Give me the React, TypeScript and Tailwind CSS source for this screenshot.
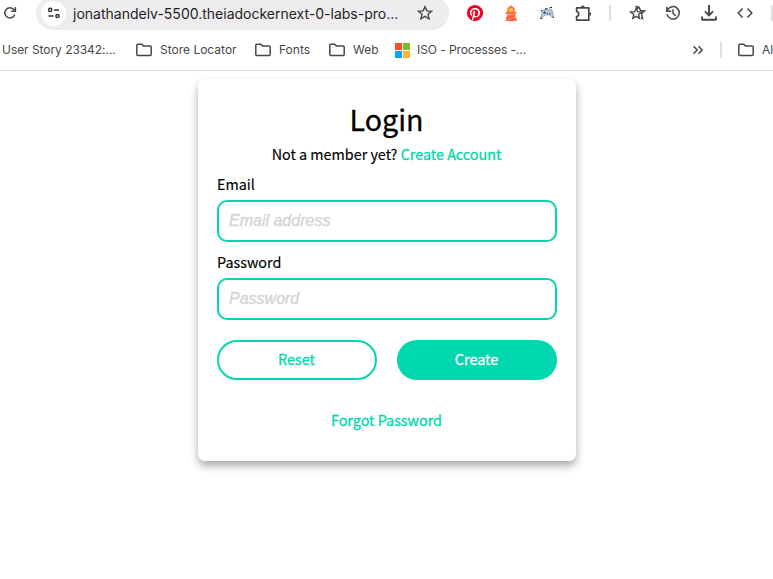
import React from "react";

const Cell = ({ children }: { children: React.ReactNode }) => (
  <div className="flex h-8 w-9 shrink-0 items-center justify-center">{children}</div>
);

const Folder = () => (
  <svg width="16" height="14" viewBox="0 0 16 14" className="shrink-0" fill="none" stroke="#474747" strokeWidth="1.5">
    <path d="M.8 11.4V2.2q0-1 1-1h3.9l1.7 1.7h6.8q1 0 1 1v7.5q0 1-1 1H1.8q-1 0-1-1z" />
  </svg>
);

const Star = () => (
  <svg width="16" height="16" viewBox="0 0 16 16" fill="none" stroke="#474747" strokeWidth="1.4">
    <path d="M8 1.7l1.9 4.2 4.6.4-3.5 3 1.1 4.5L8 11.4l-4.1 2.4L5 9.3l-3.5-3 4.6-.4z" />
  </svg>
);

const Input = ({ label, hint }: { label: string; hint: string }) => (
  <label className="flex flex-col">
    <span className="h-[30px] text-[14.35px] leading-[28px] [-webkit-text-stroke:0.15px]">{label}</span>
    <input
      placeholder={hint}
      className="h-[42px] w-full rounded-[10px] border-2 border-[#00d7ae] pr-3 pl-[10px] font-['Liberation_Sans',sans-serif] text-base outline-none placeholder:text-[#d3d3d3] placeholder:italic placeholder:[-webkit-text-stroke:0.3px_#d3d3d3]"
    />
  </label>
);

export default function App() {
  return (
    <div className="h-[579px] w-[773px] overflow-hidden bg-white font-['Inter',sans-serif] text-[#474747]">
      <header className="h-[71px] overflow-hidden border-b border-[#e0e0e0]">
        <div className="-mt-1 flex h-[34px] items-center">
          <div className="w-9 shrink-0 pl-[3px]">
            <svg width="14" height="14" viewBox="0 0 14 14" fill="none" stroke="#474747" strokeWidth="1.5">
              <path d="M11.8 8.4A5.1 5.1 0 1 1 10.8 3.5L12.4 5" />
              <path d="M12.4 1.1V5.3H8.2" />
            </svg>
          </div>
          <div className="flex h-[34px] w-[413px] shrink-0 items-center rounded-full bg-[#eeecee] pl-[5px]">
            <div className="flex size-[25px] shrink-0 items-center justify-center rounded-full bg-white">
              <svg width="14" height="12" viewBox="0 0 14 12" fill="none" stroke="#303030" strokeWidth="1.5">
                <circle cx="3.2" cy="2.9" r="1.6" />
                <path d="M7 2.9h5M1.5 9h5" />
                <circle cx="10.5" cy="9" r="1.6" />
              </svg>
            </div>
            <span className="ml-[7px] w-[336px] shrink-0 whitespace-nowrap text-[14px] text-[#1f1f1f]">jonathandelv-5500.theiadockernext-0-labs-pro...</span>
            <div className="ml-2 shrink-0"><Star /></div>
          </div>
          <div className="ml-2 flex">
            <Cell>
              <svg width="16" height="16" viewBox="0 0 24 24" fill="#f0001f">
                <path d="M12 0C5.37 0 0 5.37 0 12c0 5.08 3.16 9.42 7.62 11.17-.1-.95-.2-2.4.04-3.44l1.41-5.96s-.36-.72-.36-1.78c0-1.67.97-2.91 2.17-2.91 1.02 0 1.52.77 1.52 1.69 0 1.03-.66 2.57-1 4-.28 1.19.6 2.16 1.78 2.16 2.13 0 3.77-2.25 3.77-5.49 0-2.87-2.06-4.87-5-4.87-3.41 0-5.41 2.56-5.41 5.2 0 1.03.4 2.13.89 2.73.1.12.11.22.08.34l-.33 1.36c-.05.22-.17.27-.4.16-1.5-.7-2.43-2.88-2.43-4.64 0-3.78 2.74-7.25 7.91-7.25 4.15 0 7.38 2.96 7.38 6.92 0 4.12-2.6 7.45-6.21 7.45-1.21 0-2.35-.63-2.74-1.37l-.75 2.84c-.27 1.04-1 2.35-1.49 3.14A12 12 0 1 0 12 0z" />
              </svg>
            </Cell>
            <Cell>
              <svg width="14" height="16" viewBox="0 0 14 16">
                <path d="M3.4 3.2L7 .2l3.6 3v3.6h1.6v2.4H1.8V6.8h1.6z" fill="#ff7043" />
                <rect x="5.2" y="3.2" width="3.6" height="3.6" rx="1" fill="#ffd426" />
                <path d="M3.2 9.2h7.6L13 16H1.4z" fill="#ff8a66" />
                <path d="M2.8 11.4l8-2.2.6 2-9 3zM1.6 15.6l10.2-3 .8 2.2-4 1.2z" fill="#ff5a36" />
              </svg>
            </Cell>
            <Cell>
              <svg width="14" height="14" viewBox="0 0 14 14">
                <path d="M2.4 4.2L6 3.6l6 .2 1.6 6.4-2 .6L9.4 9H5l-2.4 2.8L.6 11z" fill="#a9cfe2" stroke="#7d9bab" strokeWidth=".7" />
                <path d="M5 3.2l2.5-.8M9.5 2l2.6-.8M.3 12.4h1.8M1 5.2l1-.9M12.4 11.3H14" stroke="#1c1c1c" strokeWidth="1.1" />
                <path d="M3 6.6h3M4.5 5.1v3" stroke="#5a4a86" strokeWidth="1" />
                <circle cx="10.2" cy="5.9" r=".9" fill="#e0b64a" />
                <circle cx="9.8" cy="7.8" r=".9" fill="#b04a80" />
                <path d="M6.8 7.6h1.2" stroke="#26415b" />
              </svg>
            </Cell>
            <Cell>
              <svg width="17" height="17" viewBox="0 0 17 17" fill="none" stroke="#474747" strokeWidth="1.7">
                <path d="M1.6 2.9h12.2v12.2H1.6v-3.6c2.8-.5 2.8-4.6 0-5z" strokeLinejoin="round" />
                <path d="M5.8 2.4a1.9 1.9 0 0 1 3.8 0M14.3 7.1a1.9 1.9 0 0 1 0 3.8" fill="#474747" stroke="none" />
              </svg>
            </Cell>
            <div className="flex w-[18px] items-center justify-center"><div className="h-4 w-0.5 bg-[#e0e0e0]" /></div>
            <Cell>
              <svg width="17" height="16" viewBox="0 0 17 16" fill="none" stroke="#474747" strokeWidth="1.4">
                <path d="M7.2 3.2l1.5 3.5 3.8.3-2.9 2.5.9 3.9-3.3-2-3.3 2 .9-3.9L1.6 7l4.1-.3z" />
                <path d="M6.6 2L8 1.4l1.2 2.7M9.6 1.2l1.9 4.2 4.2.4-3.2 2.8 1.1 4.9-1.6-.9" />
              </svg>
            </Cell>
            <Cell>
              <svg width="16" height="16" viewBox="0 0 16 16" fill="none" stroke="#474747" strokeWidth="1.5">
                <path d="M2.1 6.1A6.2 6.2 0 1 1 2 9.2M1.8 1.7v4.5h4.5M8 4.2v4l2.8 2.8" />
              </svg>
            </Cell>
            <Cell>
              <svg width="16" height="16" viewBox="0 0 16 16" fill="none" stroke="#474747" strokeWidth="1.9">
                <path d="M8 0v10M4 6.3l4 4 4-4M1 11.5v2.4q0 .9.9.9h12.2q.9 0 .9-.9v-2.4" />
              </svg>
            </Cell>
            <Cell>
              <svg width="16" height="12" viewBox="0 0 16 12" fill="none" stroke="#474747" strokeWidth="1.5">
                <path d="M5.5 1.5L1.2 6l4.3 4.5M10.5 1.5L14.8 6l-4.3 4.5" />
              </svg>
            </Cell>
            <div className="ml-2 flex items-center"><div className="h-4 w-0.5 bg-[#e0e0e0]" /></div>
          </div>
        </div>
        <nav className="flex h-10 items-center whitespace-nowrap pl-0.5 text-[12px]">
          <span className="w-[134px] shrink-0 tracking-[-0.05px]">User Story 23342:...</span>
          <Folder />
          <span className="ml-2 w-[95px] shrink-0">Store Locator</span>
          <Folder />
          <span className="ml-2 w-[50px] shrink-0">Fonts</span>
          <Folder />
          <span className="ml-2 w-[42px] shrink-0">Web</span>
          <div className="grid size-[15px] shrink-0 grid-cols-2 gap-px">
            <i className="bg-[#ff4a2b]" /><i className="bg-[#7fb928]" /><i className="bg-[#08a4ef]" /><i className="bg-[#ffb52b]" />
          </div>
          <span className="ml-[7px] w-[275px] shrink-0 tracking-[-0.08px]">ISO - Processes -...</span>
          <svg width="12" height="10" viewBox="0 0 12 10" className="shrink-0" fill="none" stroke="#474747" strokeWidth="1.5"><path d="M1.5 1.2L5.2 5 1.5 8.8M6.5 1.2L10.2 5l-3.7 3.8" /></svg>
          <div className="ml-4 h-4 w-0.5 shrink-0 bg-[#e0e0e0]" />
          <div className="ml-4 flex shrink-0"><Folder /></div>
          <span className="ml-2">Al</span>
        </nav>
      </header>
      <main className="mt-2 ml-[198px] flex h-[382px] w-[378px] flex-col rounded-[7px] bg-white px-[19px] pt-[22px] font-['Noto_Sans_CJK_SC',sans-serif] text-[14.35px] text-black shadow-[0_5px_8px_rgba(0,0,0,0.33)]">
        <h1 className="h-[38px] pr-px text-center text-[28.6px] leading-9 [-webkit-text-stroke:0.3px]">Login</h1>
        <p className="h-[31px] pr-px text-center leading-[30px] [-webkit-text-stroke:0.15px]">
          Not a member yet? <a className="text-[#00d7ae] [-webkit-text-stroke:0.3px]">Create Account</a>
        </p>
        <Input label="Email" hint="Email address" />
        <div className="mt-1.5"><Input label="Password" hint="Password" /></div>
        <div className="mt-5 grid h-10 grid-cols-2 gap-5 [-webkit-text-stroke:0.3px]">
          <button className="rounded-full border-2 border-[#00d7ae] pr-px pb-0.5 text-[#00d7ae]">Reset</button>
          <button className="rounded-full bg-[#00d7ae] pr-px pb-0.5 text-white">Create</button>
        </div>
        <a className="mt-[25px] pr-px text-center leading-[30px] text-[#00d7ae] [-webkit-text-stroke:0.3px]">Forgot Password</a>
      </main>
    </div>
  );
}
